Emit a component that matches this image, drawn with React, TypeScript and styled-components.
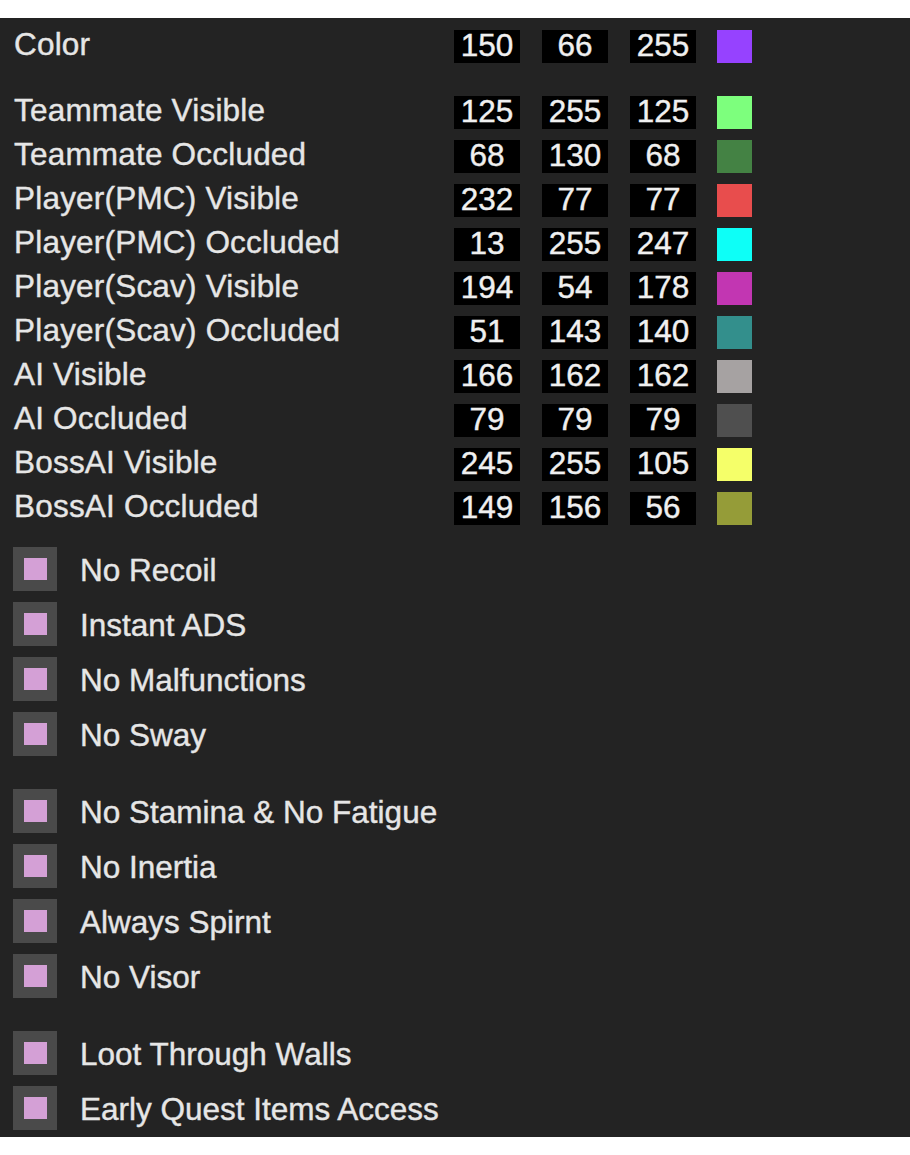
import React from "react";
import styled, { createGlobalStyle } from "styled-components";

const Global = createGlobalStyle`
  html, body { margin: 0; padding: 0; background: #ffffff; }
  body { font-family: "Liberation Sans", Arial, sans-serif; }
`;

const Panel = styled.div`
  margin-top: 18px;
  height: 1119px;
  box-sizing: border-box;
  background: #232323;
  padding: 6px 0 0 14px;
  display: flex;
  flex-direction: column;
  color: #e6e6e6;
  font-size: 31.5px;
  -webkit-text-stroke: 0.4px currentColor;
`;

const ColorSection = styled.div`
  display: flex;
  flex-direction: column;
`;

const ColorRow = styled.div<{ $gapAfter?: boolean }>`
  display: grid;
  grid-template-columns: 418px 66px 66px 66px 35px;
  column-gap: 22px;
  align-items: center;
  height: 44px;
  margin-bottom: ${(p) => (p.$gapAfter ? "22px" : "0")};
  & > :last-child { margin-left: -1px; }
`;

const Label = styled.span`
  white-space: nowrap;
  line-height: 1;
  transform: translateY(-1px);
  letter-spacing: 0.2px;
`;

const NumBox = styled.span`
  height: 33px;
  background: #000;
  color: #f0f0f0;
  display: flex;
  align-items: center;
  justify-content: center;
  line-height: 1;
`;

const Swatch = styled.span<{ $c: string }>`
  height: 33px;
  width: 35px;
  background: ${(p) => p.$c};
`;

const CheckList = styled.div`
  margin-top: 17px;
  margin-left: -1px;
  display: flex;
  flex-direction: column;
  gap: 11px;
`;

const CheckRow = styled.div<{ $gapAfter?: boolean }>`
  display: flex;
  align-items: center;
  gap: 23px;
  height: 44px;
  margin-bottom: ${(p) => (p.$gapAfter ? "22px" : "0")};
`;

const Box = styled.span`
  width: 44px;
  height: 44px;
  flex: none;
  background: #4a4a4a;
  display: flex;
  align-items: center;
  justify-content: center;
`;

const Mark = styled.span`
  width: 23px;
  height: 22px;
  background: #d4a0d6;
`;

const CheckLabel = styled.span`
  white-space: nowrap;
  line-height: 1;
  transform: translateY(2px);
`;

type C = { name: string; v: [number, number, number]; gap?: boolean };

const colors: C[] = [
  { name: "Color", v: [150, 66, 255], gap: true },
  { name: "Teammate Visible", v: [125, 255, 125] },
  { name: "Teammate Occluded", v: [68, 130, 68] },
  { name: "Player(PMC) Visible", v: [232, 77, 77] },
  { name: "Player(PMC) Occluded", v: [13, 255, 247] },
  { name: "Player(Scav) Visible", v: [194, 54, 178] },
  { name: "Player(Scav) Occluded", v: [51, 143, 140] },
  { name: "AI Visible", v: [166, 162, 162] },
  { name: "AI Occluded", v: [79, 79, 79] },
  { name: "BossAI Visible", v: [245, 255, 105] },
  { name: "BossAI Occluded", v: [149, 156, 56] },
];

const checks: { name: string; gap?: boolean }[] = [
  { name: "No Recoil" },
  { name: "Instant ADS" },
  { name: "No Malfunctions" },
  { name: "No Sway", gap: true },
  { name: "No Stamina & No Fatigue" },
  { name: "No Inertia" },
  { name: "Always Spirnt" },
  { name: "No Visor", gap: true },
  { name: "Loot Through Walls" },
  { name: "Early Quest Items Access" },
];

export default function App() {
  return (
    <>
      <Global />
      <Panel>
        <ColorSection>
          {colors.map((c) => (
            <ColorRow key={c.name} $gapAfter={c.gap}>
              <Label>{c.name}</Label>
              {c.v.map((n, i) => (
                <NumBox key={i}>{n}</NumBox>
              ))}
              <Swatch $c={`rgb(${c.v[0]}, ${c.v[1]}, ${c.v[2]})`} />
            </ColorRow>
          ))}
        </ColorSection>
        <CheckList>
          {checks.map((c) => (
            <CheckRow key={c.name} $gapAfter={c.gap}>
              <Box>
                <Mark />
              </Box>
              <CheckLabel>{c.name}</CheckLabel>
            </CheckRow>
          ))}
        </CheckList>
      </Panel>
    </>
  );
}
